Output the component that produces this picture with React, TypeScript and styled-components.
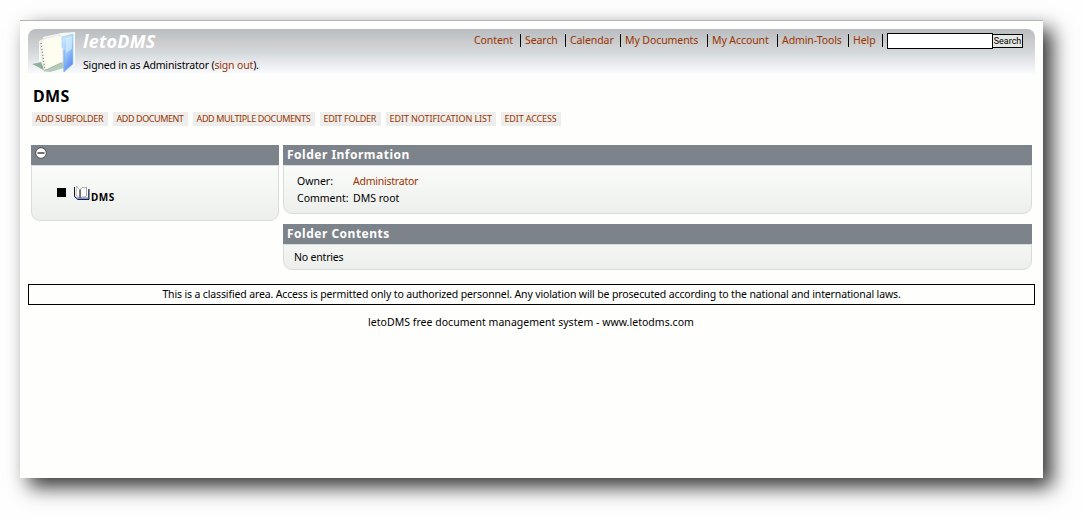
import React from "react";
import styled, { createGlobalStyle } from "styled-components";

const GlobalStyle = createGlobalStyle`
  * { box-sizing: border-box; }
  html { background: #fdfefd; }
  body {
    margin: 0;
    font: 10.5px/15px "Noto Sans", "Open Sans", sans-serif;
    color: #000;
  }
`;

const Page = styled.div`
  height: 518px;
  padding: 20px;
  overflow: hidden;
`;

const Sheet = styled.main`
  width: 1023px;
  height: 458px;
  padding: 8px 8px 0;
  background: #fefefd;
  border-top: 1px solid #b3b7b4;
  box-shadow: 9px 9px 19px rgba(0, 0, 0, 0.8);
`;

const Text = styled.span<{ $spacing?: number }>`
  letter-spacing: ${(p) => p.$spacing ?? 0}px;
  white-space: nowrap;
`;

const Link = styled.a<{ $spacing?: number }>`
  color: #993300;
  letter-spacing: ${(p) => p.$spacing ?? 0}px;
  white-space: nowrap;
`;

const Header = styled.header`
  display: flex;
  height: 44px;
  border-radius: 8px 8px 0 0;
  background: linear-gradient(#b9bdbf 0%, #d1d2d4 42%, #d3dadd 54%, #e5e6e9 72%, #f7fafd 100%);
`;

const Brand = styled.div`
  width: 398px;
  padding-left: 7px;
`;

const Logo = styled.svg`
  display: block;
  flex: none;
  width: 48px;
  height: 44px;
`;

const SiteName = styled.div`
  height: 24px;
  font-size: 18px;
  line-height: 24px;
  font-weight: 700;
  font-style: italic;
  letter-spacing: 0.25px;
  color: #fff;
`;

const SignedIn = styled.div`
  margin-top: 5px;
  letter-spacing: -0.17px;
  white-space: nowrap;
`;

const Nav = styled.nav`
  display: flex;
  align-items: flex-start;
  padding-top: 4px;
`;

const NavItem = styled.div<{ $width: number }>`
  width: ${(p) => p.$width}px;
  height: 13px;
  margin-top: 1px;
  margin-right: 4px;
  border-right: 1px solid #000;
  line-height: 12px;
`;

const SearchInput = styled.input`
  width: 106px;
  height: 16px;
  padding: 0 2px;
  border: 1px solid #000;
  border-radius: 0;
  background: #fff;
`;

const SearchButton = styled.button`
  width: 30px;
  height: 14px;
  margin: 1px 0 0;
  padding: 0;
  border: 1px solid #000;
  border-left-width: 0;
  border-radius: 0;
  background: #e6e8e3;
  color: #000;
  font: 9px/11px Roboto, sans-serif;
`;

const Title = styled.h1`
  margin: 12px 0 0 5px;
  font-size: 16px;
  line-height: 22px;
  letter-spacing: 0.3px;
`;

const Actions = styled.div`
  display: flex;
  gap: 5px;
  margin: 5px 0 0 4px;
`;

const Action = styled.div<{ $width: number }>`
  width: ${(p) => p.$width}px;
  height: 14px;
  padding-left: 3.5px;
  background: #edeeeb;
  font-size: 9px;
  line-height: 14px;
`;

const Columns = styled.div`
  display: flex;
  align-items: flex-start;
  gap: 4px;
  margin: 19px 3px 0;
`;

const Column = styled.div<{ $width: number }>`
  width: ${(p) => p.$width}px;
`;

const PanelHead = styled.h2`
  display: flex;
  height: 20px;
  margin: 0;
  padding-left: 4px;
  background: #7c838b;
  color: #fff;
  font-size: 12px;
  line-height: 19px;
  letter-spacing: 0.5px;
`;

const PanelBody = styled.div<{ $height: number; $pad: string; $gap?: number; $from?: string }>`
  height: ${(p) => p.$height}px;
  padding: ${(p) => p.$pad};
  margin-bottom: ${(p) => p.$gap ?? 0}px;
  border: 1px solid #d9dcdb;
  border-radius: 0 0 9px 9px;
  background: linear-gradient(${(p) => p.$from ?? "#fafcfa"}, #edefed);
`;

const Collapse = styled.svg`
  display: block;
  width: 12px;
  height: 12px;
  margin-top: 2px;
`;

const TreeRow = styled.div`
  display: flex;
  align-items: flex-start;
`;

const Bullet = styled.span`
  width: 9px;
  height: 9px;
  margin: 3px 8px 0 0;
  background: #000;
`;

const Book = styled.svg`
  display: block;
  width: 16px;
  height: 16px;
`;

const TreeName = styled.b`
  margin: 5px 0 0 1px;
  font-size: 10px;
  letter-spacing: 0.5px;
`;

const Info = styled.div`
  display: grid;
  grid-template-columns: 56px 1fr;
  grid-auto-rows: 17px;
`;

const Notice = styled.div`
  height: 21px;
  margin-top: 14px;
  border: 1px solid #000;
  text-align: center;
  line-height: 18px;
  letter-spacing: -0.14px;
`;

const Footer = styled.footer`
  margin-top: 10px;
  padding-right: 1px;
  text-align: center;
  letter-spacing: 0.03px;
`;

const navItems: [string, number][] = [
  ["Content", 47],
  ["Search", 41],
  ["Calendar", 51],
  ["My Documents", 83],
  ["My Account", 66],
  ["Admin-Tools", 67],
  ["Help", 30],
];

const actions: [string, number, number][] = [
  ["ADD SUBFOLDER", 76, -0.34],
  ["ADD DOCUMENT", 75, -0.43],
  ["ADD MULTIPLE DOCUMENTS", 122, -0.37],
  ["EDIT FOLDER", 61, -0.28],
  ["EDIT NOTIFICATION LIST", 110, -0.08],
  ["EDIT ACCESS", 60, -0.15],
];

function FolderLogo() {
  return (
    <Logo viewBox="0 0 48 44">
      <defs>
        <linearGradient id="cover" x1="0" y1="0" x2="0.5" y2="1">
          <stop offset="0" stopColor="#d5efff" />
          <stop offset="0.5" stopColor="#a5cffc" />
          <stop offset="1" stopColor="#5c8ff0" />
        </linearGradient>
      </defs>
      <path d="M3 35l8-3v-20l4-2v-2l14-3 5-1 13-1v32l-10 8-22-1-5-3z" fill="#f5faf5" />
      <path d="M4 35l9-2 4 9-7-4z" fill="#8fae9d" />
      <path d="M15 42l20-11 1 8-14 4z" fill="#b5ccb9" />
      <path d="M12 14l3-4 15-4 5 2v25l-19 9z" fill="#fafaf0" stroke="#d5dad3" strokeWidth=".6" />
      <path d="M18 12l14-3 2 22-15 6z" fill="#fffdf0" />
      <path d="M13 14l4 27" stroke="#7b8781" strokeWidth="1.3" strokeDasharray="1 2" />
      <path d="M16 42l17-8" stroke="#9aaea0" strokeWidth=".8" />
      <path d="M34 8l11-3v30l-9 8V20l-2-2z" fill="url(#cover)" stroke="#a5cdf5" strokeWidth=".7" />
      <path d="M38 9l6-2v13l-6 4z" fill="#dff6ff" opacity=".55" />
      <path d="M36 21v22" stroke="#6f9fe2" strokeWidth=".8" />
    </Logo>
  );
}

export default function App() {
  return (
    <>
      <GlobalStyle />
      <Page>
        <Sheet>
          <Header>
            <FolderLogo />
            <Brand>
              <SiteName>letoDMS</SiteName>
              <SignedIn>
                Signed in as Administrator (<Link $spacing={-0.17}>sign out</Link>).
              </SignedIn>
            </Brand>
            <Nav>
              {navItems.map(([label, width]) => (
                <NavItem key={label} $width={width}>
                  <Link $spacing={-0.08}>{label}</Link>
                </NavItem>
              ))}
              <SearchInput aria-label="Search" />
              <SearchButton>Search</SearchButton>
            </Nav>
          </Header>
          <Title>DMS</Title>
          <Actions>
            {actions.map(([label, width, spacing]) => (
              <Action key={label} $width={width}>
                <Link $spacing={spacing}>{label}</Link>
              </Action>
            ))}
          </Actions>
          <Columns>
            <Column $width={248}>
              <PanelHead>
                <Collapse viewBox="0 0 12 12">
                  <circle cx="6" cy="6" r="5.3" fill="#fff" stroke="#444b50" strokeWidth=".9" />
                  <path d="M2.5 6h7" stroke="#333" strokeWidth="1.4" />
                </Collapse>
              </PanelHead>
              <PanelBody $height={56} $pad="19px 0 0 25px">
                <TreeRow>
                  <Bullet />
                  <Book viewBox="0 0 16 16">
                    <path d="M.5 2v9l3 3H14.500V4.500" fill="#fff" stroke="#4d78ee" />
                    <path d="M.5 2v9.500l3 3H15V4" fill="none" stroke="#111" strokeWidth=".9" />
                    <path d="M2 13h12.500" stroke="#4d78ee" />
                    <path d="M2.500 1l3 3.500v8.500l-3.500-3z" fill="#fafafa" stroke="#9a9d9a" strokeWidth=".7" />
                    <path d="M6.500 4l2-1.500 2 .5 2-1v9l-2 1h-2l-2 1z" fill="#fff" stroke="#888" strokeWidth=".7" />
                    <path d="M6 4.500v8.500" stroke="#222" strokeWidth=".8" />
                  </Book>
                  <TreeName>DMS</TreeName>
                </TreeRow>
              </PanelBody>
            </Column>
            <Column $width={749}>
              <PanelHead>Folder Information</PanelHead>
              <PanelBody $height={49} $pad="8px 0 0 13px" $gap={10}>
                <Info>
                  <Text>Owner:</Text>
                  <Link $spacing={-0.23}>Administrator</Link>
                  <Text>Comment:</Text>
                  <Text>DMS root</Text>
                </Info>
              </PanelBody>
              <PanelHead>Folder Contents</PanelHead>
              <PanelBody $height={26} $pad="5px 0 0 10px" $from="#f4f6f4">
                <Text $spacing={-0.18}>No entries</Text>
              </PanelBody>
            </Column>
          </Columns>
          <Notice>
            This is a classified area. Access is permitted only to authorized personnel. Any violation will be
            prosecuted according to the national and international laws.
          </Notice>
          <Footer>letoDMS free document management system - www.letodms.com</Footer>
        </Sheet>
      </Page>
    </>
  );
}
